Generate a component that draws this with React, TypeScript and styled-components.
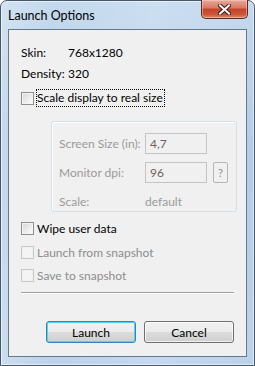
import styled, { createGlobalStyle } from "styled-components";

const Global = createGlobalStyle`
  html, body {
    margin: 0;
    padding: 0;
    background: #ffffff;
  }
  body {
    font-family: Lato, "Noto Sans", sans-serif;
    font-size: 12px;
  }
`;

const Frame = styled.div`
  box-sizing: border-box;
  width: 255px;
  height: 366px;
  display: flex;
  flex-direction: column;
  padding: 0 7px 8px 7px;
  border: 1px solid #44576b;
  border-radius: 7px 7px 0 0;
  background: linear-gradient(
      to right,
      rgba(255, 255, 255, 0.25),
      rgba(255, 255, 255, 0) 20%,
      rgba(255, 255, 255, 0.15) 60%,
      rgba(255, 255, 255, 0) 100%
    ),
    linear-gradient(to bottom, #c4d9ee, #b4cce6 40%, #bcd2ea 100%);
  box-shadow: inset 0 0 0 1px rgba(255, 255, 255, 0.55);
`;

const TitleBar = styled.div`
  height: 28px;
  display: flex;
  align-items: flex-start;
  justify-content: space-between;
  margin-right: -1px;
`;

const Title = styled.div`
  padding-top: 7px;
  font-size: 12.5px;
  color: #000000;
`;

const CloseButton = styled.div`
  box-sizing: border-box;
  width: 47px;
  height: 19px;
  margin-top: -1px;
  display: flex;
  align-items: center;
  justify-content: center;
  border: 1px solid #5b2a22;
  border-top: none;
  border-radius: 0 0 5px 5px;
  background: linear-gradient(
    to bottom,
    #e9a99b 0%,
    #d9775f 45%,
    #c4432a 50%,
    #cc5536 80%,
    #e08b6a 100%
  );
  box-shadow: inset 0 0 0 1px rgba(255, 210, 200, 0.5);
`;

const Client = styled.div`
  flex: 1;
  display: flex;
  flex-direction: column;
  border: 1px solid #66788b;
  background: #f0f0f0;
  padding: 12px 12px 0 12px;
`;

const InfoRow = styled.div`
  height: 21px;
  display: flex;
  align-items: center;
  color: #000000;
`;

const InfoLabel = styled.span`
  width: 47px;
`;

const CheckRow = styled.div<{ $top: number; $disabled?: boolean }>`
  height: 20px;
  margin-top: ${(p) => p.$top}px;
  display: flex;
  align-items: center;
  white-space: nowrap;
  color: ${(p) => (p.$disabled ? "#8d8d8d" : "#000000")};
`;

const Box = styled.span<{ $disabled?: boolean }>`
  box-sizing: border-box;
  width: 13px;
  height: 13px;
  margin-right: 3px;
  border: 1px solid ${(p) => (p.$disabled ? "#c8c8c8" : "#8f8f8f")};
  background: ${(p) =>
    p.$disabled
      ? "#f4f4f4"
      : "linear-gradient(135deg, #d6d6d6, #f6f6f6 80%)"};
  box-shadow: inset 0 0 0 1px
    ${(p) => (p.$disabled ? "#f0f0f0" : "#f4f4f4")};
`;

const Focused = styled.span`
  border: 1px dotted #000000;
  padding: 0 1px 1px 0;
  margin-left: -1px;
`;

const Group = styled.div`
  box-sizing: border-box;
  margin: 13px 0 0 30px;
  width: 186px;
  height: 91px;
  border: 1px solid #d5dfe5;
  border-radius: 3px;
  padding: 11px 0 0 7px;
  display: grid;
  grid-template-columns: 86px 62px auto;
  grid-template-rows: 21px 21px 21px;
  row-gap: 8px;
  align-items: center;
  box-shadow: inset 1px 1px 0 #ffffff;
`;

const GroupLabel = styled.span`
  color: #9a9a9a;
  white-space: nowrap;
`;

const Field = styled.div`
  box-sizing: border-box;
  height: 21px;
  border: 1px solid #c4c4c4;
  background: #f0f0f0;
  color: #6d6258;
  padding-left: 4px;
  display: flex;
  align-items: center;
`;

const HelpButton = styled.div`
  box-sizing: border-box;
  width: 15px;
  height: 21px;
  margin-left: 6px;
  border: 1px solid #b6b6b6;
  border-radius: 2px;
  color: #8d8d8d;
  display: flex;
  align-items: center;
  justify-content: center;
  font-size: 11px;
`;

const Separator = styled.div`
  margin-top: 7px;
  height: 1px;
  background: #a0a0a0;
  border-bottom: 1px solid #ffffff;
`;

const ButtonRow = styled.div`
  margin-top: 27px;
  display: flex;
  justify-content: flex-end;
  gap: 8px;
`;

const Button = styled.div<{ $default?: boolean }>`
  box-sizing: border-box;
  width: 90px;
  height: 22px;
  border-radius: 3px;
  border: 1px solid ${(p) => (p.$default ? "#3c7fb1" : "#707070")};
  background: linear-gradient(
    to bottom,
    #f2f2f2 0%,
    #ebebeb 50%,
    #dddddd 50%,
    #cfcfcf 100%
  );
  box-shadow: inset 0 0 0 1px
    ${(p) => (p.$default ? "#48d8fb" : "rgba(255, 255, 255, 0.7)")};
  display: flex;
  align-items: center;
  justify-content: center;
  color: #000000;
`;

const CloseGlyph = () => (
  <svg width="13" height="11" viewBox="0 0 13 11">
    <path
      d="M2 1.5 L11 9.5 M11 1.5 L2 9.5"
      stroke="#3a1f1a"
      strokeWidth="4"
      strokeLinecap="square"
    />
    <path
      d="M2 1.5 L11 9.5 M11 1.5 L2 9.5"
      stroke="#ffffff"
      strokeWidth="2"
      strokeLinecap="square"
    />
  </svg>
);

export default function App() {
  return (
    <>
      <Global />
      <Frame>
        <TitleBar>
          <Title>Launch Options</Title>
          <CloseButton>
            <CloseGlyph />
          </CloseButton>
        </TitleBar>
        <Client>
          <InfoRow>
            <InfoLabel>Skin:</InfoLabel>
            768x1280
          </InfoRow>
          <InfoRow>
            <InfoLabel>Density:</InfoLabel>
            320
          </InfoRow>
          <CheckRow $top={4}>
            <Box />
            <Focused>Scale display to real size</Focused>
          </CheckRow>

          <Group>
            <GroupLabel>Screen Size (in):</GroupLabel>
            <Field>4,7</Field>
            <span />
            <GroupLabel>Monitor dpi:</GroupLabel>
            <Field>96</Field>
            <HelpButton>?</HelpButton>
            <GroupLabel>Scale:</GroupLabel>
            <GroupLabel>default</GroupLabel>
            <span />
          </Group>

          <CheckRow $top={6}>
            <Box />
            Wipe user data
          </CheckRow>
          <CheckRow $top={4} $disabled>
            <Box $disabled />
            Launch from snapshot
          </CheckRow>
          <CheckRow $top={3} $disabled>
            <Box $disabled />
            Save to snapshot
          </CheckRow>

          <Separator />

          <ButtonRow>
            <Button $default>Launch</Button>
            <Button>Cancel</Button>
          </ButtonRow>
        </Client>
      </Frame>
    </>
  );
}
